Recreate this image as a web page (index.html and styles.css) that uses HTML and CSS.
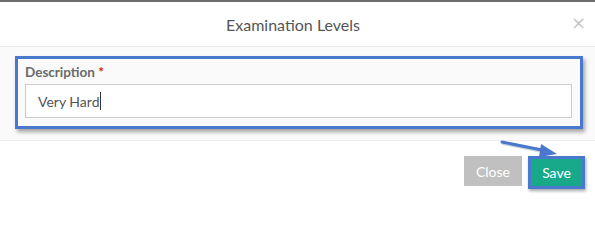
FILE: index.html
```html
<!DOCTYPE html>
<html>
<head>
<meta charset="utf-8">
<link rel="stylesheet" href="styles.css">
</head>
<body>
<div class="topline"></div>
<div class="modal">
  <header class="modal-header">
    <h4 class="title">Examination Levels</h4>
    <button class="x" aria-label="Close">&times;</button>
  </header>
  <div class="modal-body">
    <div class="highlight">
      <label class="label">Description <span class="req">*</span></label>
      <div class="input">Very Hard<span class="caret"></span></div>
    </div>
  </div>
  <footer class="modal-footer">
    <button class="btn btn-close">Close</button>
    <button class="btn btn-save">Save</button>
  </footer>
  <svg class="arrow" width="70" height="24" viewBox="0 0 70 24">
    <line x1="3" y1="3" x2="48" y2="12" stroke="#9aa7bf" stroke-width="3" stroke-linecap="round" transform="translate(1,1.5)" opacity="0.5"/>
    <line x1="3" y1="3" x2="48" y2="12" stroke="#4a78cc" stroke-width="3" stroke-linecap="round"/>
    <polygon points="42,5 58,15 40,18" fill="#4a78cc"/>
  </svg>
</div>
</body>
</html>
```
FILE: styles.css
```css
html, body {
  margin: 0;
  padding: 0;
  background: #ffffff;
  font-family: Lato, "Open Sans", sans-serif;
  overflow: hidden;
}
.topline {
  height: 2px;
  background: #6e6e6e;
}
.modal {
  position: relative;
  width: 595px;
  height: 198px;
  background: #fff;
}
.modal-header {
  height: 44px;
  border-bottom: 1px solid #e9e9e9;
  display: flex;
  align-items: center;
  padding: 0 11px 0 15px;
}
.title {
  flex: 1;
  margin: 0;
  text-align: center;
  font-size: 16px;
  font-weight: 400;
  color: #555;
}
.x {
  border: 0;
  background: none;
  padding: 0;
  margin: 0 0 2px 0;
  font-family: "DejaVu Sans", sans-serif;
  font-size: 18px;
  line-height: 18px;
  color: #c8c8c8;
  width: 13px;
}
.modal-body {
  background: #fafafa;
  padding: 9px 12px 11px 15px;
}
.highlight {
  border: 3px solid #4a78cc;
  box-shadow: 2px 3px 4px rgba(0,0,0,0.35);
  padding: 3px 8px 8px 7px;
}
.label {
  display: block;
  font-size: 13.5px;
  line-height: 20px;
  font-weight: 700;
  color: #6a6a6a;
  margin-bottom: 2px;
}
.req {
  color: #e02020;
}
.input {
  height: 32px;
  border: 1px solid #cccccc;
  background: #fff;
  box-sizing: content-box;
  padding: 0 12px;
  display: flex;
  align-items: center;
  font-size: 14px;
  color: #555;
}
.caret {
  display: inline-block;
  width: 1px;
  height: 18px;
  background: #333;
  margin-left: 1px;
}
.modal-footer {
  border-top: 1px solid #eeeeee;
  display: flex;
  justify-content: flex-end;
  align-items: flex-start;
  gap: 6px;
  padding: 15px 10px 0 0;
}
.btn {
  font-family: Lato, "Open Sans", sans-serif;
  font-size: 14px;
  color: #fff;
  border: 0;
  margin: 0;
  padding: 0;
  cursor: pointer;
}
.btn-close {
  width: 58px;
  height: 30px;
  background: #c0c0c0;
}
.btn-save {
  width: 57px;
  height: 33px;
  background: #17a98a;
  border: 3px solid #4a78cc;
  box-shadow: 1px 2px 3px rgba(0,0,0,0.35);
}
.arrow {
  position: absolute;
  left: 499px;
  top: 137px;
}
```
